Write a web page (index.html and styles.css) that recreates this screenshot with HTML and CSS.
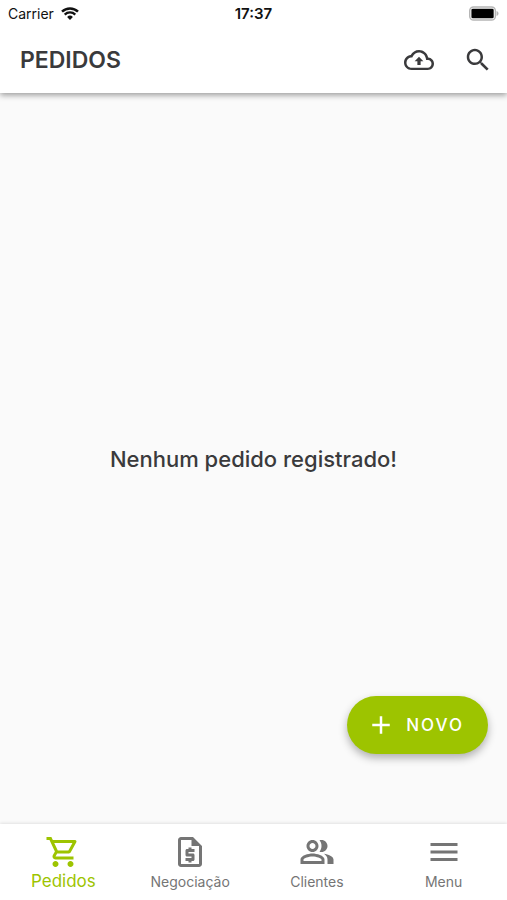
FILE: index.html
```html
<!DOCTYPE html>
<html lang="pt-BR">
<head>
  <meta charset="UTF-8" />
  <meta name="viewport" content="width=device-width, initial-scale=1.0"/>
  <title>Pedidos</title>
  <link rel="stylesheet" href="styles.css">
</head>
<body>
  <header class="top">
    <div class="status-bar">
      <div class="carrier">
        <span>Carrier</span>
        <svg class="wifi" viewBox="0 0 18 13" aria-hidden="true">
          <path d="M1 4.7a11.5 11.5 0 0 1 16 0" fill="none" stroke="currentColor" stroke-width="2.5"/>
          <path d="M3.7 7.6a7.6 7.6 0 0 1 10.6 0" fill="none" stroke="currentColor" stroke-width="2.3"/>
          <path d="M9 13l-2.9-3a4.2 4.2 0 0 1 5.8 0z" fill="currentColor"/>
        </svg>
      </div>
      <time class="clock">17:37</time>
      <svg class="battery" viewBox="0 0 31 15" aria-hidden="true">
        <rect x="0.75" y="0.75" width="26.5" height="13.5" rx="4" fill="#fff" stroke="#b5b5b5" stroke-width="1.5"/>
        <rect x="2.5" y="2.5" width="23" height="10" rx="1.5" fill="#000"/>
        <path d="M28.500 5v5c1.300-.4 2-1.400 2-2.500s-.7-2.100-2-2.500z" fill="#b5b5b5"/>
      </svg>
    </div>
    <div class="app-bar">
      <h1>PEDIDOS</h1>
      <div class="actions">
        <button type="button" class="icon-button" aria-label="Enviar pedidos">
          <svg viewBox="0 0 24 24"><path d="M19.35 10.04C18.67 6.59 15.64 4 12 4 9.11 4 6.6 5.64 5.35 8.04 2.34 8.36 0 10.91 0 14c0 3.310 2.690 6 6 6h13c2.760 0 5-2.240 5-5 0-2.640-2.050-4.780-4.650-4.960zM19 18.200H6c-2.210 0-4-1.790-4-4 0-2.250 1.530-3.960 3.560-4.170l1.070-.11.500-.95C8.080 7.140 9.940 6 12 6c2.620 0 4.880 1.860 5.390 4.430l.3 1.500 1.530.11c1.560.1 2.780 1.410 2.780 2.960 0 1.650-1.350 3.200-3 3.200zM8.500 12.900h2.200v3h2.600v-3h2.200L12 9.400z"/></svg>
        </button>
        <button type="button" class="icon-button" aria-label="Pesquisar">
          <svg viewBox="0 0 24 24"><path d="M15.500 14h-.79l-.28-.27C15.410 12.590 16 11.110 16 9.500 16 5.910 13.090 3 9.500 3S3 5.910 3 9.500 5.910 16 9.500 16c1.610 0 3.090-.59 4.230-1.570l.27.28v.79l5 4.990L20.490 19l-4.990-5zm-6 0C7.010 14 5 11.990 5 9.500S7.010 5 9.500 5 14 7.010 14 9.500 11.990 14 9.500 14z"/></svg>
        </button>
      </div>
    </div>
  </header>

  <main class="content">
    <p class="empty">Nenhum pedido registrado!</p>
    <button type="button" class="new-order">
      <svg viewBox="0 0 24 24" aria-hidden="true"><path d="M19 13h-6v6h-2v-6H5v-2h6V5h2v6h6v2z"/></svg>
      NOVO
    </button>
  </main>

  <nav class="tabs">
    <a href="#pedidos" class="tab active" aria-current="page">
      <svg viewBox="0 0 24 24" aria-hidden="true"><path d="M15.550 13c.75 0 1.410-.41 1.750-1.030l3.580-6.490C21.250 4.820 20.770 4 20.010 4H5.210l-.94-2H1v2h2l3.600 7.590-1.350 2.440C4.520 15.370 5.480 17 7 17h12v-2H7l1.100-2h7.450zM6.160 6h12.150l-2.760 5H8.530L6.160 6zM7 18c-1.100 0-1.990.9-1.990 2S5.900 22 7 22s2-.9 2-2-.9-2-2-2zm10 0c-1.100 0-1.990.9-1.990 2s.89 2 1.990 2 2-.9 2-2-.9-2-2-2z"/></svg>
      <span>Pedidos</span>
    </a>
    <a href="#negociacao" class="tab">
      <svg viewBox="0 0 24 24" aria-hidden="true"><path d="M14 2H6c-1.100 0-1.990.9-1.990 2L4 20c0 1.100.89 2 1.990 2H18c1.100 0 2-.9 2-2V8l-6-6zM6 20V4h7v4h5v12H6zm5-1h2v-1h1c.55 0 1-.45 1-1v-3c0-.55-.45-1-1-1h-3v-1h4v-2h-2V9h-2v1h-1c-.55 0-1 .45-1 1v3c0 .55.45 1 1 1h3v1H9v2h2v1z"/></svg>
      <span>Negociação</span>
    </a>
    <a href="#clientes" class="tab">
      <svg viewBox="0 0 24 24" aria-hidden="true"><path d="M16.670 13.130C18.040 14.060 19 15.320 19 17v3h4v-3c0-2.180-3.570-3.470-6.330-3.870zM15 12c2.210 0 4-1.790 4-4s-1.790-4-4-4c-.47 0-.91.1-1.330.24C14.500 5.270 15 6.580 15 8s-.5 2.730-1.330 3.760c.42.14.86.24 1.330.24zM9 12c2.210 0 4-1.790 4-4s-1.790-4-4-4-4 1.790-4 4 1.790 4 4 4zm0-6c1.100 0 2 .9 2 2s-.9 2-2 2-2-.9-2-2 .9-2 2-2zM9 13c-2.670 0-8 1.340-8 4v3h16v-3c0-2.660-5.330-4-8-4zm6 5H3v-.99C3.200 16.290 6.300 15 9 15s5.800 1.290 6 2v1z"/></svg>
      <span>Clientes</span>
    </a>
    <a href="#menu" class="tab">
      <svg viewBox="0 0 24 24" aria-hidden="true"><path d="M3 18h18v-2H3v2zm0-5h18v-2H3v2zm0-7v2h18V6H3z"/></svg>
      <span>Menu</span>
    </a>
  </nav>
</body>
</html>
```
FILE: styles.css
```css
* {
  box-sizing: border-box;
}

body {
  display: flex;
  flex-direction: column;
  min-height: 100vh;
  margin: 0;
  font-family: Inter, "Liberation Sans", sans-serif;
  background: #fafafa;
  color: #3a3a3c;
}

svg {
  display: block;
  fill: currentColor;
}

button {
  border: 0;
  font-family: inherit;
  cursor: pointer;
}

.top {
  background: #ffffff;
  box-shadow: 0 2px 6px rgba(0, 0, 0, 0.4);
}

.status-bar {
  display: grid;
  grid-template-columns: 1fr auto 1fr;
  align-items: center;
  height: 27px;
  padding: 0 8px;
  font-size: 14px;
  color: #111111;
}

.carrier {
  display: flex;
  align-items: center;
  gap: 7px;
}

.wifi {
  width: 18px;
  height: 13px;
}

.clock {
  font-size: 15px;
  font-weight: 600;
}

.battery {
  justify-self: end;
  width: 30px;
  height: 15px;
}

.app-bar {
  display: flex;
  align-items: center;
  justify-content: space-between;
  height: 66px;
  padding: 0 14px 0 20px;
}

h1 {
  margin: 0;
  font-size: 23px;
  font-weight: 600;
}

.actions {
  display: flex;
  gap: 29px;
}

.icon-button {
  padding: 0;
  background: none;
  color: inherit;
}

.icon-button svg {
  width: 30px;
  height: 30px;
}

.content {
  display: flex;
  flex: 1;
  position: relative;
  align-items: center;
  justify-content: center;
}

.empty {
  margin: 0;
  font-size: 22px;
  font-weight: 500;
}

/* floating action button */
.new-order {
  display: flex;
  position: absolute;
  right: 19px;
  bottom: 70px;
  align-items: center;
  gap: 10px;
  height: 58px;
  padding: 0 24px 0 19px;
  border-radius: 29px;
  background: #9dc400;
  color: #ffffff;
  font-size: 17px;
  font-weight: 500;
  letter-spacing: 2px;
  box-shadow: 0 4px 8px rgba(0, 0, 0, 0.3);
}

.new-order svg {
  width: 30px;
  height: 30px;
}

.tabs {
  display: grid;
  grid-template-columns: repeat(4, 1fr);
  height: 76px;
  background: #ffffff;
  box-shadow: 0 -1px 3px rgba(0, 0, 0, 0.1);
}

.tab {
  display: flex;
  flex-direction: column;
  align-items: center;
  padding-top: 10px;
  color: #757575;
  font-size: 14px;
  line-height: 24px;
  text-decoration: none;
}

.tab svg {
  width: 36px;
  height: 36px;
}

.active {
  color: #9dc400;
  font-size: 17px;
  line-height: 22px;
}
```
